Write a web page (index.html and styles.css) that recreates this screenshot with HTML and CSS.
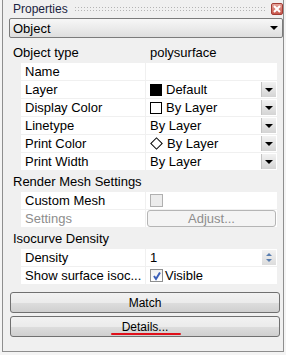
FILE: index.html
```
<!DOCTYPE html>
<html lang="en">
<head>
  <meta charset="UTF-8">
  <title>Properties</title>
  <link rel="stylesheet" href="styles.css">
</head>
<body>
  <div class="panel">
    <div class="titlebar">
      <span class="title">Properties</span>
      <span class="grip"></span>
      <span class="close">
        <svg width="8" height="8" viewBox="0 0 8 8"><path d="M1 1 L7 7 M7 1 L1 7" stroke="#fff" stroke-width="2"/></svg>
      </span>
    </div>

    <div class="select">
      <span>Object</span>
      <span class="caret"></span>
    </div>

    <div class="grid">
      <div class="cat">
        <span class="cat-label">Object type</span>
        <span class="cat-value">polysurface</span>
      </div>
      <div class="row">
        <span class="name">Name</span>
        <span class="value"></span>
      </div>
      <div class="row">
        <span class="name">Layer</span>
        <span class="value"><i class="swatch swatch-fill"></i>Default<b class="drop"></b></span>
      </div>
      <div class="row">
        <span class="name">Display Color</span>
        <span class="value"><i class="swatch"></i>By Layer<b class="drop"></b></span>
      </div>
      <div class="row">
        <span class="name">Linetype</span>
        <span class="value">By Layer<b class="drop"></b></span>
      </div>
      <div class="row">
        <span class="name">Print Color</span>
        <span class="value"><i class="diamond"></i>By Layer<b class="drop"></b></span>
      </div>
      <div class="row">
        <span class="name">Print Width</span>
        <span class="value">By Layer<b class="drop"></b></span>
      </div>

      <div class="cat">
        <span class="cat-label">Render Mesh Settings</span>
      </div>
      <div class="row">
        <span class="name">Custom Mesh</span>
        <span class="value"><i class="check check-off"></i></span>
      </div>
      <div class="row">
        <span class="name disabled">Settings</span>
        <span class="value"><span class="adjust">Adjust...</span></span>
      </div>

      <div class="cat">
        <span class="cat-label">Isocurve Density</span>
      </div>
      <div class="row">
        <span class="name">Density</span>
        <span class="value">1<b class="spin"><em class="up"></em><em class="down"></em></b></span>
      </div>
      <div class="row">
        <span class="name">Show surface isoc...</span>
        <span class="value"><i class="check">
          <svg width="10" height="10" viewBox="0 0 10 10"><path d="M2 5 L4 8 L8 1.5" fill="none" stroke="#3b5fb8" stroke-width="2"/></svg>
        </i>Visible</span>
      </div>
    </div>

    <div class="actions">
      <button class="btn">Match</button>
      <button class="btn btn-marked">Details...</button>
    </div>
  </div>
</body>
</html>
```

FILE: styles.css
```
body {
  margin: 0;
  background: #f4f4f4;
  font-family: "Liberation Sans", Arial, sans-serif;
  font-size: 13px;
  color: #000;
}

.panel {
  margin-left: 2px;
  width: 280px;
  height: 351px;
  background: #f0f0f0;
  border: 1px solid #8e8e8e;
  border-top: none;
}

.titlebar {
  display: flex;
  align-items: center;
  height: 16px;
  padding-top: 1px;
}
.title {
  padding-left: 10px;
  font-size: 12px;
  color: #1b2442;
}
.grip {
  flex: 1;
  height: 6px;
  margin: 0 4px 0 6px;
  background-image: radial-gradient(circle, #b4b4b4 0.8px, transparent 1px);
  background-size: 3px 3px;
}
.close {
  width: 10px;
  height: 10px;
  display: flex;
  align-items: center;
  justify-content: center;
  background: linear-gradient(#e6a59c, #c9574c);
  border: 1px solid #a33b33;
  border-radius: 2px;
}

.select {
  display: flex;
  align-items: center;
  justify-content: space-between;
  height: 18px;
  margin: 1px 0 0 6px;
  padding: 0 4px 0 3px;
  border: 1px solid #7b7b7b;
  border-radius: 2px;
  background: linear-gradient(#f7f7f7, #ebebeb 50%, #dedede);
}
.caret {
  width: 0;
  height: 0;
  border-left: 4px solid transparent;
  border-right: 4px solid transparent;
  border-top: 4px solid #000;
}

.grid {
  width: 268px;
  margin: 4px 0 0 6px;
}
.cat {
  display: grid;
  grid-template-columns: 137px 1fr;
  height: 21px;
  align-items: center;
}
.cat-label {
  padding-left: 4px;
  white-space: nowrap;
}
.cat-value {
  padding-left: 4px;
}
.row {
  display: grid;
  grid-template-columns: 124px 131px;
  column-gap: 1px;
  margin-left: 12px;
  height: 17px;
  margin-bottom: 1px;
}
.name,
.value {
  background: #fff;
  display: flex;
  align-items: center;
  padding-left: 4px;
  white-space: nowrap;
  overflow: hidden;
}
.disabled {
  color: #8d8d8d;
}

.swatch {
  width: 10px;
  height: 10px;
  border: 1px solid #000;
  margin-right: 4px;
}
.swatch-fill {
  background: #000;
}
.diamond {
  width: 7px;
  height: 7px;
  border: 1px solid #000;
  transform: rotate(45deg);
  margin: 0 6px 0 2px;
}
.drop {
  margin-left: auto;
  margin-right: 1px;
  width: 14px;
  height: 15px;
  display: flex;
  align-items: center;
  justify-content: center;
  background: linear-gradient(#f2f2f2, #d4d4d4);
  border-left: 1px solid #c4c4c4;
}
.drop::after {
  content: "";
  border-left: 4px solid transparent;
  border-right: 4px solid transparent;
  border-top: 4px solid #000;
}

.check {
  width: 11px;
  height: 11px;
  border: 1px solid #8e8f8f;
  background: linear-gradient(#f0f0f0, #fff);
  margin-right: 2px;
  display: flex;
  align-items: center;
  justify-content: center;
}
.check-off {
  border-color: #b0b0b0;
  background: #ececec;
}

.adjust {
  flex: 1;
  height: 15px;
  margin: 0 1px 0 -3px;
  border: 1px solid #b5b5b5;
  border-radius: 3px;
  background: #f4f4f4;
  color: #8d8d8d;
  display: flex;
  align-items: center;
  justify-content: center;
}

.spin {
  margin-left: auto;
  margin-right: 1px;
  width: 14px;
  height: 15px;
  display: flex;
  flex-direction: column;
  align-items: center;
  justify-content: space-evenly;
  background: linear-gradient(#f2f2f2, #dcdcdc);
}
.up {
  border-left: 3px solid transparent;
  border-right: 3px solid transparent;
  border-bottom: 3px solid #5a7fb0;
}
.down {
  border-left: 3px solid transparent;
  border-right: 3px solid transparent;
  border-top: 3px solid #5a7fb0;
}

.actions {
  display: flex;
  flex-direction: column;
  gap: 3px;
  margin: 8px 0 0 7px;
  width: 270px;
}
.btn {
  height: 21px;
  font-family: "Liberation Sans", Arial, sans-serif;
  font-size: 12px;
  color: #000;
  border: 1px solid #707070;
  border-radius: 3px;
  background: linear-gradient(#f2f2f2, #ebebeb 50%, #dddddd 51%, #cfcfcf);
  padding: 0;
}
.btn-marked {
  position: relative;
}
.btn-marked::after {
  content: "";
  position: absolute;
  left: 100px;
  top: 16px;
  width: 70px;
  height: 2px;
  background: #e0101a;
  border-radius: 1px;
}
```
